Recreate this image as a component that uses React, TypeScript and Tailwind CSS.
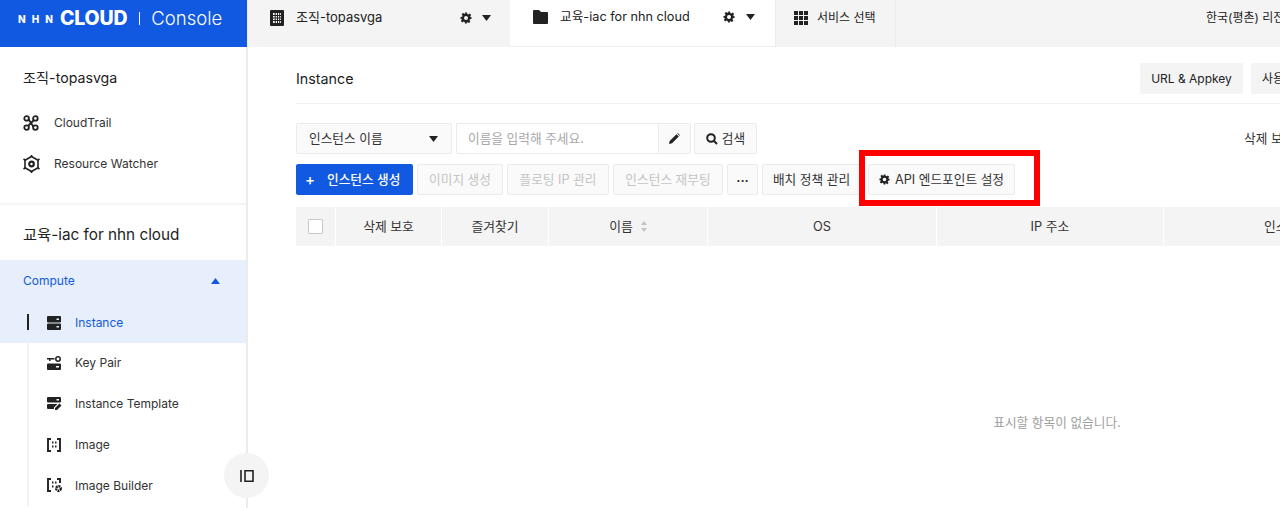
import React from "react";

const font = { fontFamily: '"Inter","Noto Sans CJK KR",sans-serif' };

const Gear = ({ s = 12 }: { s?: number }) => (
  <svg width={s} height={s} viewBox="0 0 24 24" fill="#222">
    <path fillRule="evenodd" d="M10 1h4l.7 3.2 1.9.8 2.8-1.8 2.8 2.8-1.8 2.8.8 1.9L23 10v4l-3.2.7-.8 1.9 1.8 2.8-2.8 2.8-2.8-1.8-1.9.8L14 23h-4l-.7-3.2-1.9-.8-2.8 1.8-2.8-2.8 1.8-2.8-.8-1.9L1 14v-4l3.2-.7.8-1.9-1.8-2.8 2.8-2.8 2.8 1.8 1.9-.8zM12 8a4 4 0 100 8 4 4 0 000-8z" />
  </svg>
);
const Caret = ({ up = false, c = "#222" }: { up?: boolean; c?: string }) => (
  <svg width="9" height="6" viewBox="0 0 9 6" fill={c}>
    <path d={up ? "M4.5 0L9 6H0z" : "M0 0h9L4.5 6z"} />
  </svg>
);
const CloudTrail = () => (
  <svg width="16" height="16" viewBox="0 0 16 16" fill="none" stroke="#222" strokeWidth="1.8">
    <circle cx="3.6" cy="3.4" r="2.3" />
    <circle cx="12.4" cy="3.4" r="2.3" />
    <circle cx="3.6" cy="12.6" r="2.3" />
    <circle cx="12.4" cy="12.6" r="2.3" />
    <path d="M5 11l6-6M5.4 4l5.2 8" />
  </svg>
);
const Watcher = () => (
  <svg width="17" height="18" viewBox="0 0 17 18" fill="none" stroke="#222" strokeWidth="1.6">
    <path d="M8.5 1.5l6.5 3.7v7.6l-6.5 3.7L2 12.8V5.2z" />
    <path d="M8.5 0v2M8.5 16v2M0.5 4l2 1.2M16.500 4l-2 1.200M.5 14l2-1.200M16.500 14l-2-1.200" />
    <circle cx="8.500" cy="9" r="2.300" strokeWidth="2.200" />
  </svg>
);
const InstanceIcon = () => (
  <svg width="14" height="14" viewBox="0 0 14 14" fill="#222">
    <path fillRule="evenodd" d="M1 0h12a1 1 0 011 1v4.500a1 1 0 01-1 1H1a1 1 0 01-1-1V1a1 1 0 011-1zm8.500 2.500v1.500H12V2.500zM1 7.500h12a1 1 0 011 1V13a1 1 0 01-1 1H1a1 1 0 01-1-1V8.500a1 1 0 011-1zm8.500 2.500v1.500H12V10z" />
  </svg>
);
const KeyPairIcon = () => (
  <svg width="14" height="14" viewBox="0 0 14 14" fill="#222">
    <path d="M0 2h7.500v1.500H3.500V5H2V3.500H0zM1 7.500h12a1 1 0 011 1V13a1 1 0 01-1 1H1a1 1 0 01-1-1V8.500a1 1 0 011-1z" />
    <circle cx="11" cy="3" r="2.200" fill="none" stroke="#222" strokeWidth="1.500" />
    <rect x="9" y="10" width="3" height="1.500" fill="#fff" />
  </svg>
);
const TemplateIcon = () => (
  <svg width="15" height="14" viewBox="0 0 15 14" fill="#222">
    <path fillRule="evenodd" d="M1 0h12a1 1 0 011 1v3.500a1 1 0 01-1 1H1a1 1 0 01-1-1V1a1 1 0 011-1zm8.500 2v1.500H12V2z" />
    <path d="M1 7h9.500L7 10.500V12H1a1 1 0 01-1-1V8a1 1 0 011-1zM8 11l4.500-4.500 2 2L10 13H8z" />
  </svg>
);
const ImageIcon = () => (
  <svg width="14" height="14" viewBox="0 0 14 14" fill="none" stroke="#222" strokeWidth="1.900">
    <path d="M4 1H1v12h3M10 1h3v12h-3" />
    <path d="M5 4.500h1.500M8 4.500h1.500M5 8.500h1.500M8 8.500h1.500" strokeWidth="2" />
  </svg>
);
const BuilderIcon = () => (
  <svg width="16" height="15" viewBox="0 0 16 15" fill="none" stroke="#222" strokeWidth="1.900">
    <path d="M4 1H1v12h3M10 1h3v4" />
    <path d="M5 4.500h1.500M8 4.500h1.500M5 8.500h1.500" strokeWidth="2" />
    <circle cx="11.500" cy="10.500" r="2.300" strokeWidth="2.400" strokeDasharray="1.800 .6" />
  </svg>
);
const Org = () => (
  <svg width="14" height="16" viewBox="0 0 14 16">
    <rect width="14" height="16" rx="1" fill="#222" />
    <path d="M3 3h8v10H3z" fill="#fff" />
    <path d="M5.200 3v10M7.500 3v10M9.700 3v10M3 5.500h8M3 8h8M3 10.500h8" stroke="#222" strokeWidth="1" />
  </svg>
);
const Folder = () => (
  <svg width="15" height="14" viewBox="0 0 15 14" fill="#222">
    <path d="M1 0h5l2 2h6a1 1 0 011 1v10a1 1 0 01-1 1H1a1 1 0 01-1-1V1a1 1 0 011-1z" />
  </svg>
);
const GridIcon = () => (
  <svg width="14" height="14" viewBox="0 0 14 14" fill="#222">
    {[0, 5, 10].flatMap((x) =>
      [0, 5, 10].map((y) => <rect key={`${x}-${y}`} x={x} y={y} width="4" height="4" />)
    )}
  </svg>
);
const Pencil = () => (
  <svg width="11" height="11" viewBox="0 0 11 11" fill="#222">
    <path d="M0 11l.7-3L7.500 1.200l2.300 2.300L3 10.300zM8.300.5l.5-.5 2.200 2.200-.6.600z" />
  </svg>
);
const Search = () => (
  <svg width="12" height="12" viewBox="0 0 12 12" fill="none" stroke="#222" strokeWidth="2">
    <circle cx="5" cy="5" r="3.800" />
    <path d="M7.800 7.800L11 11" />
  </svg>
);

const subItems = [
  { label: "Key Pair", icon: <KeyPairIcon /> },
  { label: "Instance Template", icon: <TemplateIcon /> },
  { label: "Image", icon: <ImageIcon /> },
  { label: "Image Builder", icon: <BuilderIcon /> },
];

const Sidebar = () => (
  <aside className="relative w-[248px] shrink-0 h-full flex flex-col bg-white border-r-2 border-[#ececec]">
    <div className="h-[47px] shrink-0 bg-[#1159e0] flex items-center pl-[18px] pb-[10px] text-white -mr-[1px]">
      <span className="text-[10px] font-extrabold tracking-[6px] leading-none w-[42px]">NHN</span>
      <span className="text-[19.500px] font-extrabold tracking-[-0.200px] leading-none">CLOUD</span>
      <span className="w-px h-[13px] bg-white ml-[12px] mr-[11px]" />
      <span className="text-[18.500px] font-light leading-none">Console</span>
    </div>
    <div className="h-[158px] shrink-0 flex flex-col border-b-2 border-[#f5f5f5] pl-[23px]">
      <div className="text-[14.200px] text-[#222] leading-5 mt-[21px]">조직-topasvga</div>
      <div className="flex items-center h-5 mt-[25px] text-[12px] text-[#333]">
        <span className="w-[31px] flex"><CloudTrail /></span>CloudTrail
      </div>
      <div className="flex items-center h-5 mt-[21px] text-[12px] text-[#333]">
        <span className="w-[31px] flex"><Watcher /></span>Resource Watcher
      </div>
    </div>
    <div className="text-[15.300px] text-[#222] leading-5 pl-[23px] mt-[20px]">교육-iac for nhn cloud</div>
    <div className="mt-[15px] h-[83px] shrink-0 bg-[#e7effc] flex flex-col">
      <div className="flex items-center justify-between h-[41px] pt-[1px] pl-[23px] pr-[26px] text-[12px] text-[#1159e0]">
        Compute <Caret up c="#1159e0" />
      </div>
      <div className="flex items-center h-[41px] pt-[2px] relative pl-[47px] text-[12px] text-[#1159e0]">
        <span className="absolute left-[27px] top-[13px] w-[2px] h-[16px] bg-[#222]" />
        <span className="w-[28px] flex"><InstanceIcon /></span>Instance
      </div>
    </div>
    <div className="flex flex-col border-l-2 border-[#f2f3f5] ml-[27px] pl-[18px] -mt-[1px]">
      {subItems.map((it) => (
        <div key={it.label} className="flex items-center h-[41px] text-[12px] text-[#333]">
          <span className="w-[28px] flex">{it.icon}</span>
          {it.label}
        </div>
      ))}
    </div>
    <button className="absolute left-[224px] top-[453px] w-[45px] h-[45px] rounded-full bg-[#f4f4f4] flex items-center justify-center z-10">
      <svg width="14" height="12" viewBox="0 0 14 12" fill="none" stroke="#222" strokeWidth="1.600">
        <path d="M1 0v12M5 .8h8v10.400H5z" />
      </svg>
    </button>
  </aside>
);

const Tabs = () => (
  <div className="h-[47px] shrink-0 flex bg-[#f4f4f4] text-[13px] text-[#222]">
    <div className="w-[262px] flex items-center pl-[22px] pb-[11px]">
      <span className="w-[26px] flex"><Org /></span>
      <span className="flex-1">조직-topasvga</span>
      <span className="flex mr-[10px]"><Gear /></span>
      <span className="flex mr-[19px]"><Caret /></span>
    </div>
    <div className="w-[265px] flex items-center bg-white border-b border-[#f0f0f0] pl-[23px] pb-[12px]">
      <span className="w-[27px] flex"><Folder /></span>
      <span className="flex-1 text-[12.700px]">교육-iac for nhn cloud</span>
      <span className="flex mr-[11px]"><Gear /></span>
      <span className="flex mr-[20px]"><Caret /></span>
    </div>
    <div className="w-[121px] flex items-center pl-[18px] pb-[11px] border-x border-[#ebebeb] text-[12px]">
      <span className="w-[23px] flex"><GridIcon /></span>서비스 선택
    </div>
    <div className="flex-1 flex items-center whitespace-nowrap overflow-hidden pl-[310px] pb-[11px] text-[12px]">
      <span className="shrink-0">한국(평촌) 리전</span>
    </div>
  </div>
);

const btn = "h-[31px] shrink-0 flex items-center rounded-[2px] border border-[#ebebeb] bg-[#fafafa] text-[12.700px] text-[#333] whitespace-nowrap";
const dis = "h-[31px] shrink-0 flex items-center justify-center rounded-[2px] border border-[#ebebeb] bg-[#fafafa] text-[12.700px] text-[#c4c4c4] whitespace-nowrap";

const columns = [
  { w: "w-[105px]", label: "삭제 보호" },
  { w: "w-[106px]", label: "즐겨찾기" },
  { w: "w-[158px]", label: "이름", sort: true },
  { w: "w-[228px]", label: "OS" },
  { w: "w-[226px]", label: "IP 주소" },
  { w: "w-[274px]", label: "인스턴스 타입" },
];

const Main = () => (
  <main className="relative flex-1 min-w-0 flex flex-col overflow-hidden">
    <Tabs />
    <div className="w-[1522px] ml-[48px] flex flex-col flex-1">
      <div className="h-[57px] shrink-0 flex items-center gap-[8px] border-b border-[#f0f0f0] pt-[7px]">
        <h1 className="text-[14.300px] text-[#222] font-normal w-[836px]">Instance</h1>
        <div className="w-[103px] h-[31px] bg-[#f4f4f4] rounded-[2px] flex items-center justify-center text-[12px] text-[#222]">URL &amp; Appkey</div>
        <div className="w-[90px] h-[31px] bg-[#f4f4f4] rounded-[2px] flex items-center pl-[11px] text-[12px] text-[#222]">사용 가이드</div>
      </div>
      <div className="flex items-center mt-[19px] h-[31px]">
        <div className={`${btn} w-[156px] justify-between pl-[12px] pr-[13px]`}>인스턴스 이름 <Caret /></div>
        <div className="ml-[4px] w-[235px] h-[31px] flex rounded-[2px] border border-[#ebebeb]">
          <div className="flex-1 flex items-center pl-[11px] text-[12.700px] text-[#a8a8a8]">이름을 입력해 주세요.</div>
          <div className="w-[32px] flex items-center justify-center border-l border-[#ebebeb] bg-[#fafafa]"><Pencil /></div>
        </div>
        <div className={`${btn} justify-center ml-[3px] w-[63px] gap-[4px]`}><Search />검색</div>
        <div className="ml-[487px] text-[12.700px] text-[#333] whitespace-nowrap">삭제 보호 변경</div>
      </div>
      <div className="flex items-center mt-[10px] h-[31px] gap-[4px]">
        <div className="w-[117px] h-[31px] shrink-0 rounded-[2px] bg-[#1159e0] text-white text-[12.700px] font-medium flex items-center pl-[9px]">
          <span className="w-[22px] text-[15px] leading-none">+</span>인스턴스 생성
        </div>
        <div className={`${dis} w-[86px]`}>이미지 생성</div>
        <div className={`${dis} w-[102px]`}>플로팅 IP 관리</div>
        <div className={`${dis} w-[110px]`}>인스턴스 재부팅</div>
        <div className={`${btn} justify-center w-[31px] font-bold pb-[4px]`}>...</div>
        <div className={`${btn} justify-center w-[99px]`}>배치 정책 관리</div>
        <div className={`${btn} justify-center w-[147px] gap-[5px] ml-[3px]`}><Gear s={11} />API 엔드포인트 설정</div>
      </div>
      <div className="flex mt-[12px] h-[39px] shrink-0 gap-[1px] text-[12.800px] text-[#333] bg-white">
        <div className="w-[39px] bg-[#f4f4f4] flex items-center pl-[12px]">
          <span className="w-[15px] h-[15px] bg-white border border-[#c8c8c8] rounded-[1px]" />
        </div>
        {columns.map((c) => (
          <div key={c.label} className={`${c.w} shrink-0 bg-[#f4f4f4] flex items-center justify-center gap-[8px] whitespace-nowrap`}>
            {c.label}
            {c.sort && (
              <svg width="6" height="11" viewBox="0 0 6 11" fill="#c4c4c4">
                <path d="M3 0l3 4H0zM3 11L0 7h6z" />
              </svg>
            )}
          </div>
        ))}
      </div>
      <div className="flex-1 flex justify-center pt-[167px] text-[12.700px] text-[#a0a0a0]">
        표시할 항목이 없습니다.
      </div>
    </div>
    <div className="absolute left-[611px] top-[150px] w-[181px] h-[56px] border-[6px] border-[#ff0000] pointer-events-none" />
  </main>
);

export default function App() {
  return (
    <div className="w-[1280px] h-[508px] overflow-hidden flex bg-white" style={font}>
      <Sidebar />
      <Main />
    </div>
  );
}
